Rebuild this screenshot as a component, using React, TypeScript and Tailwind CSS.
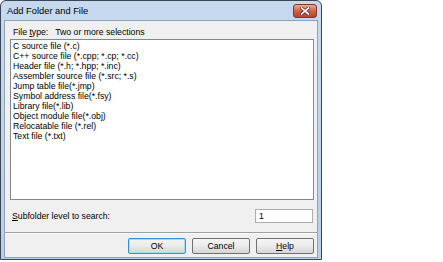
import React from "react";

const items = [
  "C source file (*.c)",
  "C++ source file (*.cpp; *.cp; *.cc)",
  "Header file (*.h; *.hpp; *.inc)",
  "Assembler source file (*.src; *.s)",
  "Jump table file(*.jmp)",
  "Symbol address file(*.fsy)",
  "Library file(*.lib)",
  "Object module file(*.obj)",
  "Relocatable file (*.rel)",
  "Text file (*.txt)",
];

function Btn({ children, def }: { children: React.ReactNode; def?: boolean }) {
  return (
    <div
      className={`w-[58px] h-[16px] rounded-[2px] border flex items-center justify-center bg-gradient-to-b from-[#f6f6f6] via-[#ebebeb] to-[#d6d6d6] ${
        def ? "border-[#3c8fd6] shadow-[inset_0_0_0_1px_#a8dcf6]" : "border-[#707070]"
      }`}
    >
      <span className="leading-[10px]">{children}</span>
    </div>
  );
}

export default function App() {
  return (
    <div
      className="w-[443px] h-[262px] bg-white text-black"
      style={{ fontFamily: '"Liberation Sans", Arial, sans-serif' }}
    >
      <div className="w-[322px] h-[260px] border border-[#3a4756] rounded-t-[6px] bg-gradient-to-b from-[#c6d9ee] to-[#b8cfe8] flex flex-col px-[3px] pb-[1px]">
        <div className="h-[19px] flex items-center justify-between shrink-0">
          <span className="text-[9.3px] leading-[10px] pl-[3px] pt-[1px]">Add Folder and File</span>
          <div className="w-[24px] h-[14px] mr-[1px] mt-[1px] rounded-[3px] border border-[#7a3a30] bg-gradient-to-b from-[#e8a89a] via-[#d2604a] to-[#c0402c] flex items-center justify-center">
            <svg width="10" height="8" viewBox="0 0 10 8">
              <path d="M1.5 1 L8.5 7 M8.5 1 L1.5 7" stroke="#3a1a14" strokeWidth="3" strokeLinecap="square" />
              <path d="M1.5 1 L8.5 7 M8.5 1 L1.5 7" stroke="#ffffff" strokeWidth="1.7" strokeLinecap="square" />
            </svg>
          </div>
        </div>
        <div className="flex-1 bg-[#f0f0f0] border border-[#8ea3bb] flex flex-col text-[8.7px] leading-[10px]">
          <div className="ml-[8px] mt-[6px] flex">
            <span>
              File <span className="underline">t</span>ype:
            </span>
            <span className="ml-[7px]">Two or more selections</span>
          </div>
          <div className="ml-[5px] mt-[2px] w-[304px] h-[161px] bg-white border border-[#828790] pl-[2px] pt-[1px] flex flex-col">
            {items.map((t) => (
              <div key={t}>{t}</div>
            ))}
          </div>
          <div className="mt-[9px] flex items-center">
            <span className="ml-[7px] flex-1">
              <span className="underline">S</span>ubfolder level to search:
            </span>
            <div className="w-[58px] h-[14px] mr-[4px] bg-white border border-[#abadb3] pl-[3px] flex items-center">
              1
            </div>
          </div>
          <div className="mt-[9px] border-t border-[#a0a0a0] border-b border-b-white" />
          <div className="mt-[4px] flex justify-end gap-[6px] pr-[3px]">
            <Btn def>OK</Btn>
            <Btn>Cancel</Btn>
            <Btn>
              <span className="underline">H</span>elp
            </Btn>
          </div>
        </div>
      </div>
    </div>
  );
}
